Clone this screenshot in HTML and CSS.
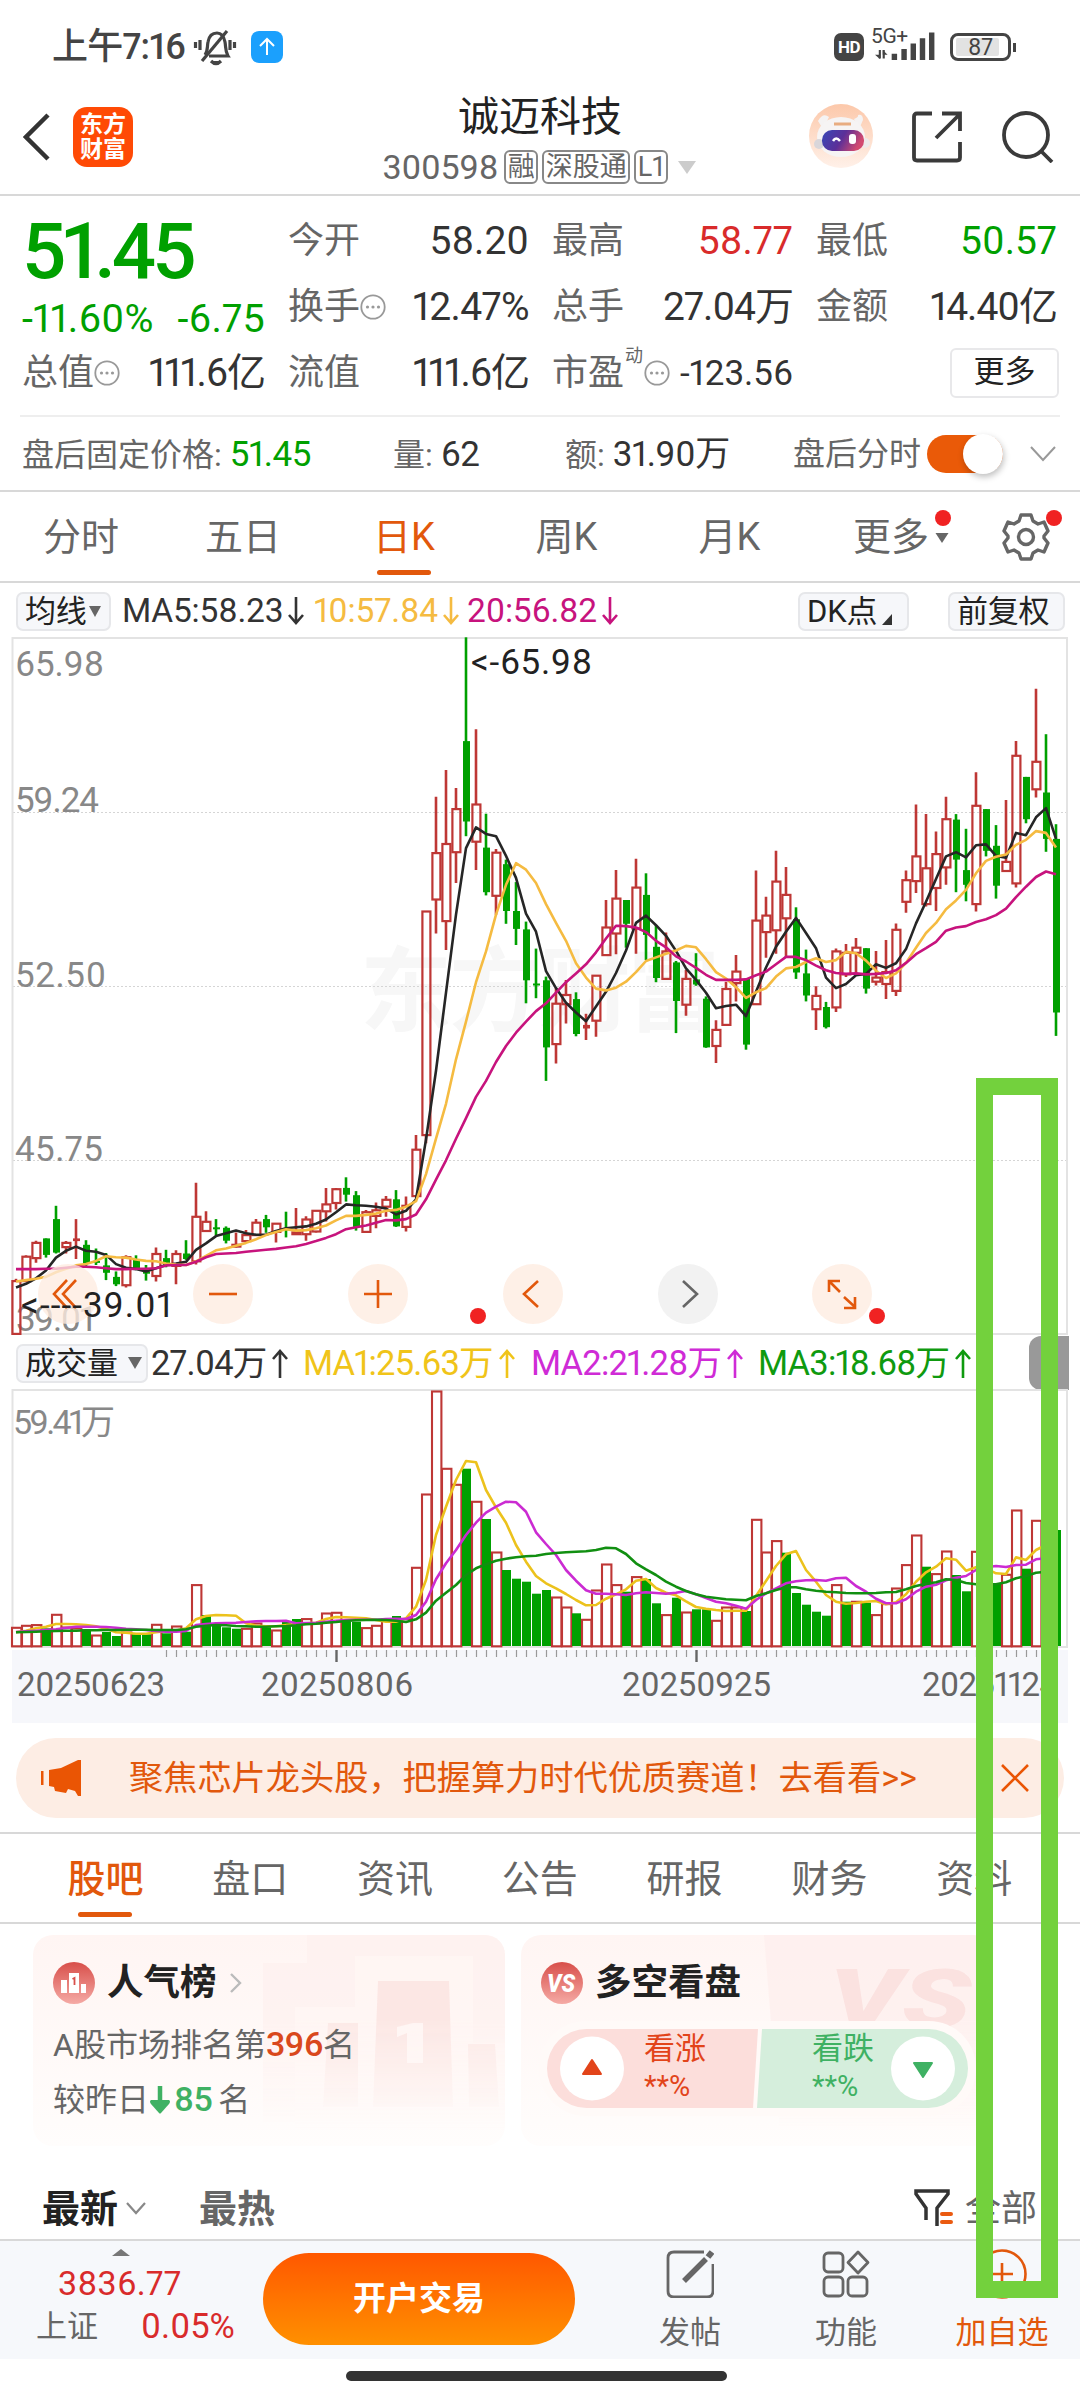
FILE: index.html
```html
<!DOCTYPE html>
<html lang="zh-CN">
<head>
<meta charset="utf-8">
<title>诚迈科技 300598</title>
<link rel="stylesheet" href="styles.css">
</head>
<body>
<div class="phone">
  <div class="status">
    <span class="clock">上午7:16</span>
    <svg class="bell" width="44" height="38" viewBox="0 0 44 38" fill="none" stroke="#444" stroke-width="3.2"><path d="M12 27C15 23 14 19 15 14C16 8 19 5 24 5C29 5 31 9 32 14C33 19 32 23 35 28H16"/><path d="M34 3L9 33"/><path d="M18 33Q23 38 28 33" fill="#444"/><path d="M7 12V22M2.5 14V20M37 12V22M41.500 14V20"/></svg>
    <svg class="up-app" width="32" height="32" viewBox="0 0 32 32"><rect width="32" height="32" rx="8" fill="#1ba0fd"/><path d="M16 24V9M9 15L16 8L23 15" fill="none" stroke="#fff" stroke-width="2"/></svg>
    <span class="grow"></span>
    <span class="hd">HD</span>
    <span class="signal"><span class="net">5G+</span>
      <svg width="65" height="29" viewBox="0 0 65 29"><path d="M5 18V27M9 18V27" stroke="#444" stroke-width="2.200"/><path d="M0 23L5 27.500V23ZM8 18L13 23H8Z" fill="#444"/><path d="M20 28.500V22M30 28.500V17M39.500 28.500V11.500M49 28.500V6M58.500 28.500V0" stroke="#444" stroke-width="5.600"/></svg>
    </span>
    <span class="battery"><b>87</b></span>
  </div>

  <header class="header">
    <svg class="back" width="28" height="48" viewBox="0 0 28 48"><path d="M25 2L3 24L25 46" fill="none" stroke="#333" stroke-width="4.500"/></svg>
    <span class="logo">东方<br>财富</span>
    <div class="title">
      <h1>诚迈科技</h1>
      <div class="code"><span class="num">300598</span><i>融</i><i>深股通</i><i>L1</i><svg width="18" height="13" viewBox="0 0 18 13"><path d="M0 0H18L9 13Z" fill="#ccc"/></svg></div>
    </div>
    <svg class="avatar" width="64" height="66" viewBox="0 0 64 66">
      <defs><linearGradient id="peach" x2="0" y2="1"><stop stop-color="#fcc8aa"/><stop offset="1" stop-color="#fff1e9"/></linearGradient><linearGradient id="visor" x2="1" y2=".3"><stop stop-color="#3748b8"/><stop offset=".55" stop-color="#5c2f98"/><stop offset="1" stop-color="#d24a70"/></linearGradient></defs>
      <circle cx="32" cy="33" r="32" fill="url(#peach)"/>
      <path d="M9 18Q14 9 20 14L14 26ZM54 17Q54 11 49 12Q50 14 45 16L50 26Z" fill="#f5f3f3"/>
      <ellipse cx="32" cy="34" rx="24" ry="20" fill="#f6f4f4"/><circle cx="10" cy="41" r="5" fill="#d9d6da"/><circle cx="56" cy="40" r="5" fill="#eeeaea"/>
      <path d="M25 21H42" stroke="#e8ac80" stroke-width="3"/>
      <rect x="13" y="27" width="42" height="21" rx="10" fill="url(#visor)"/>
      <path d="M24 38Q27 33 31 38" fill="none" stroke="#fff" stroke-width="2.500"/><rect x="40" y="31" width="7" height="10" rx="3" fill="#fff"/>
    </svg>
    <svg class="share" width="50" height="52" viewBox="0 0 50 52" fill="none" stroke="#3a3a3a" stroke-width="3.800"><path d="M20 2.500H5Q2 2.500 2 5.500V46.500Q2 49.500 5 49.500H45Q48 49.500 48 46.500V31"/><path d="M30 2.500H48V20M47 4L24 27"/></svg>
    <svg class="search" width="52" height="52" viewBox="0 0 52 52" fill="none" stroke="#3a3a3a" stroke-width="3.800"><circle cx="24" cy="24" r="22"/><path d="M39 40L50 51"/></svg>
  </header>

  <section class="quote">
    <div class="col first">
      <div class="price">51.45</div>
      <div class="row change"><span>-11.60%</span><span>-6.75</span></div>
      <div class="row"><label>总值<svg class="dots"><use href="#dots"/></svg></label><span class="k">111.6亿</span></div>
    </div>
    <div class="col">
      <div class="row"><label>今开</label><span>58.20</span></div>
      <div class="row"><label>换手<svg class="dots"><use href="#dots"/></svg></label><span class="k2">12.47%</span></div>
      <div class="row"><label>流值</label><span class="k">111.6亿</span></div>
    </div>
    <div class="col">
      <div class="row"><label>最高</label><span class="red">58.77</span></div>
      <div class="row"><label>总手</label><span class="k">27.04万</span></div>
      <div class="row"><label>市盈<sup>动</sup><svg class="dots"><use href="#dots"/></svg></label><span class="pe">-123.56</span></div>
    </div>
    <div class="col">
      <div class="row"><label>最低</label><span class="green">50.57</span></div>
      <div class="row"><label>金额</label><span class="k">14.40亿</span></div>
      <div class="row"><b class="more-btn">更多</b></div>
    </div>
  </section>
  <svg width="0" height="0" class="defs"><defs><g id="dots"><circle cx="13" cy="13" r="11.700" fill="none" stroke="#999" stroke-width="1.800"/><circle cx="7.500" cy="13" r="1.600" fill="#999"/><circle cx="13" cy="13" r="1.600" fill="#999"/><circle cx="18.500" cy="13" r="1.600" fill="#999"/></g></defs></svg>

  <section class="after">
    <span class="a1">盘后固定价格: <b class="green">51.45</b></span>
    <span class="a2">量: <b>62</b></span>
    <span class="a3">额: <b>31.90万</b></span>
    <span class="a4">盘后分时</span><span class="toggle"><i></i></span>
    <svg class="chev" width="26" height="16" viewBox="0 0 26 16"><path d="M1 1L13 14L25 1" fill="none" stroke="#999" stroke-width="2"/></svg>
  </section>

  <nav class="periods">
    <span>分时</span><span>五日</span><span class="on">日K</span><span>周K</span><span>月K</span>
    <span class="more">更多<svg width="14" height="34" viewBox="0 0 14 34"><path d="M.5 13H13.500L7 23Z" fill="#666"/></svg><i class="dot"></i></span>
    <span class="gear"><svg width="48" height="50" viewBox="0 0 48 50" fill="none" stroke="#666" stroke-width="3.400" stroke-linejoin="round"><path d="M19 3H29L31 9L36 12L42 10L46 19L42 24V26L46 31L42 40L36 38L31 41L29 47H19L17 41L12 38L6 40L2 31L6 26V24L2 19L6 10L12 12L17 9Z"/><circle cx="24" cy="25" r="7.500"/></svg><i class="dot"></i></span>
  </nav>

  <div class="indicators">
    <b class="chip c1">均线<svg width="12" height="11" viewBox="0 0 12 11"><path d="M0 0H12L6 11Z" fill="#666"/></svg></b>
    <span class="m1">MA5:58.23<svg class="arr"><use href="#down"/></svg></span>
    <span class="m2">10:57.84<svg class="arr"><use href="#down"/></svg></span>
    <span class="m3">20:56.82<svg class="arr"><use href="#down"/></svg></span>
    <span class="grow"></span>
    <b class="chip c2">DK点<svg width="10" height="11" viewBox="0 0 10 11"><path d="M10 0V11H0Z" fill="#333"/></svg></b>
    <b class="chip c3">前复权</b>
  </div>
  <svg width="0" height="0" class="defs"><defs>
    <path id="down" d="M8 2V28M1 20L8 28L15 20" fill="none" stroke="currentColor" stroke-width="2.600"/>
    <path id="up" d="M8 30V3M1 11L8 3L15 11" fill="none" stroke="currentColor" stroke-width="2.600"/>
  </defs></svg>

  <div class="kline">
    <svg id="kline" width="1080" height="698" viewBox="0 637 1080 698"></svg>
    <div class="tools">
      <span><svg viewBox="0 0 60 60"><path d="M29 16L16 30L29 44M38 16L25 30L38 44"/></svg></span>
      <span><svg viewBox="0 0 60 60"><path d="M16 30H44"/></svg></span>
      <span><svg viewBox="0 0 60 60"><path d="M16 30H44M30 16V44"/></svg></span>
      <span><svg viewBox="0 0 60 60"><path d="M35 17L21 30L35 43"/></svg><i class="dot"></i></span>
      <span class="off"><svg viewBox="0 0 60 60"><path d="M25 17L39 30L25 43"/></svg></span>
      <span><svg viewBox="0 0 60 60"><path d="M28 17H17V28M17 17L28 28M32 33L43 43M32 44H43V33"/></svg><i class="dot"></i></span>
    </div>
    <span class="low">&lt;----39.01</span>
  </div>

  <div class="volhead">
    <b class="chip">成交量<svg width="14" height="12" viewBox="0 0 14 12"><path d="M0 0H14L7 12Z" fill="#666"/></svg></b>
    <span class="v0">27.04万<svg class="arr"><use href="#up"/></svg></span>
    <span class="v1">MA1:25.63万<svg class="arr"><use href="#up"/></svg></span>
    <span class="v2">MA2:21.28万<svg class="arr"><use href="#up"/></svg></span>
    <span class="v3">MA3:18.68万<svg class="arr"><use href="#up"/></svg></span>
    <span class="grow"></span><i class="handle"></i>
  </div>
  <svg id="volume" class="block" width="1080" height="334" viewBox="0 1389 1080 334"></svg>

  <div class="banner">
    <svg width="42" height="36" viewBox="0 0 42 36"><path d="M1 11V25" stroke="#ea5504" stroke-width="3"/><path d="M8 10L20 8L37 0H40V36H37L34 31L27 29L25 33L14 31L13 27L8 26Z" fill="#ea5504"/></svg>
    <span>聚焦芯片龙头股，把握算力时代优质赛道！去看看&gt;&gt;</span>
    <svg class="x" width="30" height="30" viewBox="0 0 30 30"><path d="M2 2L28 28M28 2L2 28" stroke="#ea5504" stroke-width="2.600"/></svg>
  </div>

  <nav class="sections"><span class="on">股吧</span><span>盘口</span><span>资讯</span><span>公告</span><span>研报</span><span>财务</span><span>资料</span></nav>

  <div class="cards">
    <div class="card">
      <svg class="art" viewBox="0 0 472 211"><path d="M230 28H274V0H472V211H230Z" fill="#fdeeec" opacity=".55"/><path d="M262 72H322V21H440V108H472V211H262Z" fill="#fff6f4" opacity=".8"/><path d="M345 46H416L420 172H340Z" fill="#fbe4e1" opacity=".8"/><path d="M295 88H325V172H290ZM435 109H462L466 172H436Z" fill="#fbe6e3" opacity=".8"/><path d="M390 88V128H374V98L364 102V92L380 88Z" fill="#fff5f3"/></svg>
      <div class="ct"><svg width="42" height="42" viewBox="0 0 42 42"><circle cx="21" cy="21" r="21" fill="url(#badge)"/><path d="M8 18H14V31H8ZM28 22H33V31H28ZM16 11H26V31H16Z" fill="#fff"/><path d="M19.500 17L21.500 16V23" fill="none" stroke="#d84f4a" stroke-width="1.800"/></svg><h2>人气榜</h2><svg width="13" height="20" viewBox="0 0 13 20"><path d="M2 1L11 10L2 19" fill="none" stroke="#bbb" stroke-width="2.400"/></svg></div>
      <p>A股市场排名第<b class="orange">396</b>名</p>
      <p>较昨日<svg width="22" height="28" viewBox="0 0 22 28"><path d="M11 0V16" stroke="#3fb163" stroke-width="4.500"/><path d="M2 14H20Q22 15 20 18L12 27Q11 28 10 27L2 18Q0 15 2 14Z" fill="#3fb163"/></svg><b class="grn">85</b><span class="ming">名</span></p>
    </div>
    <div class="card">
      <svg class="art" viewBox="0 0 472 211"><path d="M243 0H472V211H260Z" fill="#fdeeec" opacity=".7"/><text x="308" y="92" font-size="82" textLength="142" lengthAdjust="spacingAndGlyphs" fill="#fbe2e0" class="vs">VS</text></svg>
      <div class="ct"><svg width="42" height="42" viewBox="0 0 42 42"><defs><linearGradient id="badge" x2="0" y2="1"><stop stop-color="#d84f4a"/><stop offset="1" stop-color="#f5aaa5"/></linearGradient></defs><circle cx="21" cy="21" r="21" fill="url(#badge)"/><text x="6" y="30" font-size="25" textLength="28" lengthAdjust="spacingAndGlyphs" class="vs" fill="#fff">VS</text></svg><h2>多空看盘</h2></div>
      <div class="poll">
        <svg class="pollbg" width="437" height="95" viewBox="0 0 437 95"><rect width="437" height="95" rx="47" fill="#fffaf8"/><path d="M47.500 8H219L214 87H47.500A39.500 39.500 0 0 1 47.500 8Z" fill="#fcdedb"/><path d="M223 8H389.500A39.500 39.500 0 0 1 389.500 87H218Z" fill="#d5eedc"/><circle cx="53" cy="47.500" r="32" fill="#fff"/><circle cx="384" cy="47.500" r="32" fill="#fff"/><path d="M53 39L62 53H44Z" fill="#e2441a" stroke="#e2441a" stroke-width="2" stroke-linejoin="round"/><path d="M384 56L393 42H375Z" fill="#3fb163" stroke="#3fb163" stroke-width="2" stroke-linejoin="round"/></svg>
        <span class="bull">看涨<br><small>**%</small></span><span class="bear">看跌<br><small>**%</small></span>
      </div>
    </div>
  </div>

  <div class="filters"><b>最新</b><svg width="20" height="14" viewBox="0 0 20 14"><path d="M1 1L10 11L19 1" fill="none" stroke="#888" stroke-width="2.200"/></svg><b class="hot">最热</b><span class="grow"></span>
    <svg width="40" height="42" viewBox="0 0 40 42"><path d="M12 32V20L2 6V3H34V6L23 20V38" fill="none" stroke="#333" stroke-width="3.500"/><path d="M28 26H37M28 34H37" stroke="#ea5a10" stroke-width="4" stroke-linecap="round"/></svg><span class="all">全部</span></div>

  <footer class="bar">
    <div class="index"><svg width="18" height="7" viewBox="0 0 18 7"><path d="M0 7L9 0L18 7Z" fill="#777"/></svg><div class="pt">3836.77</div><div class="sub"><span>上证</span><em>0.05%</em></div></div>
    <b class="open">开户交易</b>
    <div class="act"><svg width="48" height="48" viewBox="0 0 48 48" fill="none" stroke="#666" stroke-width="2.800"><path d="M38 2H8Q2 2 2 8V41Q2 47 8 47H41Q47 47 47 41V14"/><path d="M18 31L40 9" stroke-width="5.500"/><path d="M42 7L46 2" stroke-width="6"/></svg>发帖</div>
    <div class="act"><svg width="48" height="48" viewBox="0 0 48 48" fill="none" stroke="#666" stroke-width="2.800"><rect x="2" y="3" width="19" height="19" rx="4"/><rect x="2" y="27" width="19" height="19" rx="4"/><rect x="26" y="27" width="19" height="19" rx="4"/><path d="M36 2L46 12.500L36 23L26 12.500Z" stroke-linejoin="round"/></svg>功能</div>
    <div class="act add"><svg width="50" height="50" viewBox="0 0 50 50" fill="none" stroke="#e2580c" stroke-width="2.600"><circle cx="25" cy="25" r="23.500"/><path d="M14 25H36M25 14V36"/></svg>加自选</div>
  </footer>
  <div class="home"><i></i></div>
  <div class="mark"></div>
</div>
<script src="chart.js"></script>
</body>
</html>
```
FILE: styles.css
```css
*{box-sizing:border-box}
body{margin:0;background:#fff}
.phone{position:relative;width:1080px;height:2400px;overflow:hidden;background:#fff;color:#333;font-family:Roboto,"Noto Sans CJK SC",sans-serif;font-size:36px;line-height:1;font-variant-numeric:proportional-nums}
b,i,em,h1,h2{font-weight:400;font-style:normal;margin:0}
.grow{flex:1}
.block{display:block}
.defs{position:absolute}
.red{color:#d92b2b}.green{color:#00a000}.orange{color:#d9481c}.grn{color:#3fb163}
.dot{position:absolute;width:16px;height:16px;border-radius:50%;background:#f02222}

.status{display:flex;align-items:center;height:92px;padding:1px 69px 0 52px;color:#444}
.clock{font-size:36px;font-weight:500;width:141px;letter-spacing:-.8px;white-space:nowrap}
.up-app{margin-left:14px}
.hd{width:30px;height:28px;border-radius:7px;background:#444;color:#fff;font-size:17px;font-weight:700;line-height:28px;text-align:center;letter-spacing:-.5px}
.signal{display:flex;position:relative;width:63px;margin-left:11px;align-items:flex-end;height:29px}
.net{position:absolute;left:-4px;top:-6px;font-size:21px;letter-spacing:-.4px}
.battery{position:relative;width:61px;height:28px;border:3px solid #444;border-radius:8px;margin-left:12px;padding:2px 3px}
.battery b{display:block;width:43px;height:18px;background:#e2e2e2;border-radius:2px;text-align:center;font-size:23px;line-height:19px;padding-left:6px}
.battery:after{content:"";position:absolute;right:-8px;top:7px;width:3px;height:9px;background:#444}

.header{display:flex;align-items:flex-start;height:104px;border-bottom:2px solid #d8d8d8;padding-left:23px}
.back{margin-top:21px}
.logo{width:60px;height:60px;margin:15px 0 0 22px;border-radius:14px;background:#ff4a05;color:#fff;font-weight:700;font-size:23px;line-height:25px;padding-top:5px;text-align:center}
.title{width:400px;margin-left:207px;text-align:center;flex:none}
h1{font-size:41px;line-height:50px;color:#222}
.code{display:flex;align-items:center;justify-content:center;gap:4px;height:34px;margin-top:8px;color:#666;width:320px;margin-left:39px}
.code .num{font-size:34px;margin-right:2px;letter-spacing:-.2px}
.code i{border:2px solid #888;border-radius:6px;font-size:27px;height:34px;line-height:30px;padding:0 1.500px}
.code svg{margin-left:6px}
.avatar{margin:11px 0 0 69px}
.share{margin:19px 0 0 39px}
.search{margin:19px 0 0 40px}

.quote{display:grid;grid-template-columns:244px 240px 240px 240px;gap:0 24px;height:221px;margin:0 20px;padding:12px 0 0 2px;border-bottom:2px solid #eee}
.col{margin:0 1px 0 -2px}
.col.first{margin-left:0}
.row{display:flex;justify-content:space-between;align-items:center;height:66px;font-size:39px;letter-spacing:0;white-space:nowrap}
.row .k{letter-spacing:-1px}
.row .k2{letter-spacing:-.6px}
.row label{display:flex;align-items:center;font-size:36px;color:#666;letter-spacing:0}
.dots{width:26px;height:26px}
.first .price{height:88px;line-height:88px;font-size:78px;font-weight:500;color:#00a000;letter-spacing:-4px}
.first .change{height:46px;color:#00a000;font-size:39.500px;letter-spacing:.2px}
.first .row:last-child{height:62px}
.row sup{font-size:18px;align-self:flex-start;margin:-8px 1px 0}
.row .pe{letter-spacing:0;font-size:35px}
.more-btn{margin-left:auto;width:109px;height:50px;border:2px solid #e8e8ea;border-radius:6px;line-height:44px;text-align:center;font-size:31px;letter-spacing:0;color:#222;margin-right:-2px}

.after{display:flex;align-items:center;height:75px;border-bottom:2px solid #d8d8d8;padding:1px 24px 0 22px;font-size:32px;color:#666;white-space:nowrap}
.after b{font-size:35px;color:#333;letter-spacing:-.4px}
.after b.green{color:#00a000}
.a1{width:371px}.a2{width:172px}.a3{width:228px}.a4{width:134px}
.toggle{width:76px;height:38px;border-radius:19px;background:#ea5a08;padding-left:36px}
.toggle i{display:block;width:40px;height:40px;margin-top:-1px;border-radius:50%;background:#fff;box-shadow:1px 3px 6px rgba(0,0,0,.25)}
.chev{margin-left:27px}

.periods{display:grid;grid-template-columns:162px 162px 160px 165px 161px 142px 128px;height:91px;border-bottom:2px solid #d8d8d8;font-size:38px;color:#666}
.periods>span{position:relative;display:flex;align-items:center;justify-content:center;height:90px}
.periods .on{color:#e2580c}
.periods .on:after,.sections .on:after{content:"";position:absolute;left:50%;bottom:7px;width:54px;height:5px;margin-left:-27px;border-radius:3px;background:#e2580c}
.more svg{margin:0 0 0 6px}
.more .dot{left:125px;top:18px}
.periods .gear{padding-left:20px}
.gear .dot{right:18px;top:18px}
.periods .more{justify-content:flex-start;padding-left:43px}

.chip{display:flex;align-items:center;border:2px solid #e6e7ea;border-radius:7px;background:#f6f7fa;height:39px;color:#222;font-size:31px;padding-left:7px;white-space:nowrap;flex:none}
.indicators{display:flex;align-items:center;height:54px;padding:2px 15px 0 16px;font-size:33.500px;letter-spacing:-.2px;white-space:nowrap}
.indicators .chip svg{margin-left:2px}
.c1{width:95px}.c2{width:111px;margin-right:39px}.c3{width:117px}
.indicators .c2 svg{margin:16px 0 0 5px}
.arr{width:16px;height:32px;margin-left:5px;vertical-align:-5px}
.m1{margin-left:11px;width:192px}
.m2{width:153px;color:#f5bb41}
.m3{color:#c7137d}

.kline{position:relative;height:698px}
.kline>svg{display:block;overflow:visible}
.tools{position:absolute;left:38px;top:627px;display:flex;gap:94.900px}
.tools span{position:relative;width:60px;height:60px;border-radius:50%;background:rgba(254,236,224,.78)}
.tools svg{display:block;fill:none;stroke:#e2580c;stroke-width:2.600}
.tools .off{background:#f2f2f2}
.tools .off svg{stroke:#666}
.tools .dot{left:-33px;top:44px}
.tools span:last-child .dot{left:57px}
.low{position:absolute;left:21px;top:651px;font-size:35px;color:#222;letter-spacing:1.100px}

.volhead{display:flex;align-items:center;height:54px;padding:2px 11px 0 16px;font-size:34.500px;white-space:nowrap;letter-spacing:-.8px}
.volhead .chip{width:132px;letter-spacing:0}
.volhead .chip svg{margin-left:10px}
.volhead .arr{margin-left:6px}
.v0{margin-left:3px;width:152px}
.v1{width:228px;color:#f0c419}
.v2{width:227px;color:#cf2bd6}
.v3{color:#0f9a0f}
.handle{width:40px;height:54px;border-radius:12px 0 0 12px;background:#999}

.banner{display:flex;align-items:center;width:1048px;height:80px;margin:15px 16px 0;border-radius:40px;background:#fdede4;padding:0 34px 0 25px;color:#e2580c;font-size:34.200px;white-space:nowrap}
.banner span{margin-left:46px;flex:1}

.sections{display:grid;grid-template-columns:repeat(7,144.800px);height:92px;margin-top:14px;padding-left:33px;border-top:2px solid #d8d8d8;border-bottom:2px solid #d8d8d8;font-size:38px;color:#666}
.sections span{position:relative;display:flex;align-items:center;justify-content:center;height:90px}
.sections .on{color:#e2580c;font-weight:500}

.cards{display:grid;grid-template-columns:472px 472px;gap:16px;padding:11px 0 0 33px}
.card{position:relative;height:211px;border-radius:20px;overflow:hidden;background:linear-gradient(#fff5f3,#fffdfc);padding:26px 0 0 20px;font-size:32px;color:#666}
.card>*{position:relative}
.card .art{position:absolute;left:0;top:0;width:472px;height:211px;-webkit-mask-image:linear-gradient(#000 40%,transparent 92%);mask-image:linear-gradient(#000 40%,transparent 92%)}
.vs{font-family:Roboto,sans-serif;font-weight:900;font-style:italic}
.ct{display:flex;align-items:center;height:44px}
h2{font-size:36.500px;font-weight:700;color:#222;margin:0 12px}
.card p{margin:0;height:55px;line-height:55px;white-space:nowrap}
.card .ct+p{margin-top:12px}
.card p b{font-size:34px;font-weight:500;letter-spacing:-.5px}
.card p svg{vertical-align:-3px;margin-right:3px}
.ming{margin-left:6px}
.poll{width:437px;height:95px;margin:16px 0 0 -2px}
.pollbg{position:absolute;left:0;top:0}
.poll span{position:absolute;left:105px;top:9px;font-size:31px;line-height:37px;color:#e2441a}
.poll small{font-size:29px}
.poll .bear{left:273px;color:#3fb163}

.filters{display:flex;align-items:center;height:93px;padding:32px 43px 0 42px;font-size:38px;color:#222}
.filters b{font-weight:700}
.filters b+svg{margin:0 53px 0 8px}
.filters .hot{color:#666}
.filters .all{font-size:36px;color:#666;margin-left:11px}

.bar{display:flex;height:120px;border-top:2px solid #d8d8d8;background:#f6f8fb}
.index{width:263px;color:#d92b2b}
.index svg{display:block;margin:8px 0 0 112px}
.pt{font-size:34px;margin:10px 0 0 58px;letter-spacing:.3px}
.sub{display:flex;font-size:34.500px;margin-top:9px;align-items:center}
.sub span{margin:0 43px 0 36px;font-size:31px;color:#666}
.open{width:312px;height:92px;margin-top:12px;border-radius:46px;background:linear-gradient(#ff5800,#ff9000);color:#fff;font-weight:700;font-size:33px;line-height:92px;text-align:center}
.act{display:flex;flex-direction:column;align-items:center;width:156px;padding-top:9px;font-size:31px;color:#666}
.act svg{margin-bottom:19px}
.open+.act{margin-left:37px}
.add{color:#e2580c;padding-top:8px}
.add svg{margin-bottom:18px}
.home{display:flex;justify-content:center;padding-top:12px}
.home i{width:381px;height:10px;border-radius:5px;background:#333;margin-left:-8px}
.mark{position:absolute;left:976px;top:1078px;width:82px;height:1220px;border:17px solid #73d13d}
```
FILE: chart.js
```js
// Candles: [colour, high, body top, body bottom, low], one per trading day, 10px apart.
const candles = `r1413,1418,1533,1533 r1362,1365,1418,1418 r1330,1335,1368,1378 g1325,1325,1361,1367 g1254,1283,1356,1358 r1331,1335,1344,1358 d1283,1325,1331,1370 g1329,1339,1380,1388 g1347,1374,1376,1383 g1357,1384,1400,1416
g1397,1409,1425,1429 r1362,1366,1427,1432 g1362,1371,1392,1392 g1383,1397,1402,1417 r1345,1359,1407,1419 g1350,1368,1383,1388 r1351,1359,1385,1425 g1329,1358,1370,1372 r1204,1278,1375,1382 r1266,1289,1309,1310
g1283,1301,1304,1319 g1299,1302,1330,1336 r1312,1339,1343,1345 r1307,1318,1331,1333 r1283,1291,1318,1320 g1274,1283,1301,1313 r1292,1293,1311,1334 g1267,1303,1305,1323 r1259,1312,1316,1318 r1277,1284,1316,1330
r1264,1265,1310,1312 r1215,1251,1266,1288 r1215,1218,1248,1262 g1192,1215,1230,1245 g1222,1231,1300,1308 r1263,1268,1311,1313 r1247,1264,1276,1303 r1233,1241,1256,1278 g1220,1240,1299,1300 r1234,1254,1300,1310
r1100,1132,1233,1235 r612,613,1100,1118 r363,486,587,661 r305,466,634,697 r344,390,484,551 g16,242,417,449 r216,380,461,523 g400,474,571,578 r477,485,579,620 g500,510,612,640
g549,612,651,686 g635,652,763,813 g694,770,774,802 g755,763,909,982 r780,814,902,944 r762,795,815,857 g789,804,880,885 d836,860,868,893 r752,753,851,886 r588,648,708,710
r523,585,661,706 g588,588,640,692 r498,561,650,705 g530,577,664,719 g643,690,758,767 r659,700,760,761 g721,724,808,878 r740,760,816,840 g704,761,772,775 g798,803,909,910
r850,871,906,943 r766,782,860,862 r708,744,769,809 g758,760,903,914 r524,633,815,817 r581,622,658,714 r481,548,654,705 r516,577,628,712 g604,630,746,760 g696,748,796,809
r776,797,826,871 g810,821,865,868 r694,700,822,832 r684,703,750,756 r671,692,703,748 g693,693,781,792 r699,757,766,774 r675,745,771,804 r639,653,786,797 r524,545,592,616
r380,493,547,573 r401,519,597,602 r439,488,562,612 r363,412,517,555 g401,413,500,571 g433,523,555,591 r310,383,597,613 g390,390,481,493 g425,470,557,585 r370,505,525,527
r242,274,552,561 g320,320,412,421 r128,287,347,365 g227,354,455,483 g423,455,833,884`.split(/\s+/);

const ma5 = "1432 1424 1412 1395 1367 1352 1343 1352 1354 1361 1381 1389 1392 1397 1390 1383 1380 1376 1350 1336 1320 1314 1308 1314 1317 1317 1309 1303 1301 1299 1293 1284 1268 1251 1253 1254 1256 1260 1273 1265 1240 1110 960 790 620 475 430 444 449 492 540 618 657 743 780 812 833 852 820 788 747 698 638 622 643 666 699 737 762 790 824 819 816 841 788 735 690 657 627 660 693 757 780 771 752 749 728 736 726 695 639 592 542 493 484 495 469 467 492 496 442 447 408 388 455";
const ma10 = "1419 1416 1413 1409 1399 1391 1384 1381 1374 1364 1366 1367 1371 1374 1375 1380 1382 1383 1375 1363 1351 1347 1341 1335 1327 1318 1311 1305 1308 1307 1303 1297 1286 1276 1276 1274 1271 1265 1263 1256 1244 1185 1108 1032 935 853 767 700 620 555 508 522 551 597 638 677 726 757 781 785 779 766 745 721 713 705 698 688 691 717 745 759 778 801 789 780 755 737 734 723 715 723 719 701 704 720 742 758 748 725 692 660 638 608 589 566 530 503 494 489 468 457 438 442 474";
const ma20 = "1392 1392 1392 1391 1391 1389 1387 1387 1388 1390 1392 1392 1391 1391 1390 1384 1383 1383 1376 1366 1359 1358 1357 1354 1352 1350 1348 1345 1342 1337 1331 1324 1316 1305 1301 1297 1291 1285 1286 1283 1273 1240 1197 1155 1108 1063 1017 982 941 906 877 853 830 813 790 767 748 728 702 672 644 645 648 658 677 691 711 722 736 751 762 762 762 761 752 744 728 712 712 719 731 741 747 749 748 750 749 747 741 725 706 693 679 655 648 645 636 630 621 607 582 559 538 526 532";

const vols = "r921 r915 r913 g925 r882 r920 r923 g928 r944 g936 g948 r935 g943 g943 r912 g940 r917 g935 r793 g885 g912 g922 g926 r924 r908 g922 r929 g903 g897 r895 r908 r878 r876 g905 g905 r922 r915 r896 g888 r895 r741 r521 r212 r444 r492 g446 r543 g597 r695 g750 g776 g785 g821 g810 r830 r860 g880 r897 r809 r731 r793 g815 r769 g777 g850 r883 g833 r875 g868 g868 r900 r860 r860 g873 r597 r695 r661 g698 g819 g854 g875 g887 r793 g845 r843 g848 r883 r850 r803 r733 r644 g740 r760 r692 g765 g814 r693 g750 g790 r762 r569 g746 r600 g640 g630".split(" ");
const v1 = "937 932 925 920 912 912 913 915 919 926 937 938 941 941 937 933 932 925 898 888 885 886 887 910 917 919 919 915 912 910 908 897 891 892 893 895 900 905 905 895 860 780 645 560 480 423 427 510 562 608 675 725 768 790 805 822 840 856 855 836 823 808 782 777 804 818 826 844 861 866 870 873 872 872 828 783 738 703 693 750 785 825 845 851 849 845 843 853 847 823 785 757 740 715 719 752 742 745 760 762 712 720 690 675 660";
const v2 = "936 934 932 930 928 924 920 920 920 921 923 926 928 930 933 935 935 933 915 912 910 909 908 906 904 903 903 902 910 909 908 905 902 900 899 899 899 897 896 897 885 845 778 730 690 645 608 578 560 545 547 575 637 672 705 750 782 811 821 821 823 825 820 817 819 821 818 813 823 834 845 850 857 866 840 820 805 790 784 781 780 782 775 773 798 815 836 850 850 838 815 800 794 781 773 768 750 742 738 741 735 734 718 715 710";
const v3 = "937 936 935 934 933 932 932 931 931 930 930 929 929 929 930 930 930 928 920 917 915 916 918 919 920 920 919 918 916 913 911 908 906 903 901 900 899 900 902 906 898 878 842 818 795 765 745 733 722 716 712 709 707 702 699 697 695 694 690 683 685 702 730 748 765 785 800 813 823 830 834 838 839 841 828 820 810 802 802 808 812 815 817 819 820 820 819 817 816 808 798 791 787 778 780 789 793 793 793 787 775 768 758 755 750";

const px = i => 16 + 10 * i;
const py = v => +(630 + v / 2.178).toFixed(1);
const vy = v => +(1320 + v / 3).toFixed(1);
const line = (s, f, c) => `<polyline fill="none" stroke="${c}" stroke-width="2.6" stroke-linejoin="round" points="${s.split(" ").map((v, i) => px(i) + "," + f(v)).join(" ")}"/>`;
const label = (x, y, w, t, c, size) => `<text x="${x}" y="${y}" textLength="${w}" font-size="${size}" fill="${c}">${t}</text>`;
const RED = "#be3735", GREEN = "#00a000";

let k = `<text x="360" y="1024" font-size="92" textLength="360" font-weight="700" fill="#f7f7f7">东方财富</text>`;
for (const y of [812.5, 986.5, 1160.5]) k += `<path d="M13 ${y}H1067" stroke="#d5d5d5" stroke-dasharray="2 2"/>`;
k += `<path d="M12.500 1334V638H1067V1334Z" fill="none" stroke="#e3e3e3" stroke-width="2"/>`;
k += label(15, 676, 89, "65.98", "#888", 35) + label(15, 812, 84, "59.24", "#888", 35) + label(15, 987, 91, "52.50", "#888", 35) + label(15, 1161, 88, "45.75", "#888", 35) + label(16, 1331, 79, "39.01", "#888", 35);
candles.forEach((s, i) => {
  const x = px(i), [h, t, b, l] = s.slice(1).split(",").map(v => py(+v)), kind = s[0];
  const c = kind === "g" ? GREEN : RED;
  if (kind === "r") k += `<path d="M${x} ${h}V${t}M${x} ${b}V${l}" stroke="${c}" stroke-width="2.6"/><rect x="${x - 3.6}" y="${t}" width="8" height="${Math.max(1.5, b - t).toFixed(1)}" fill="none" stroke="${c}" stroke-width="2.2"/>`;
  else k += `<path d="M${x} ${h}V${l}" stroke="${c}" stroke-width="2.6"/><rect x="${x - 3}" y="${t}" width="7" height="${Math.max(2, b - t).toFixed(1)}" fill="${c}"/>`;
});
k += line(ma5, py, "#262626") + line(ma10, py, "#f5bb41") + line(ma20, py, "#c7137d");
k += label(471, 674, 121, "&lt;-65.98", "#222", 35);
document.getElementById("kline").innerHTML = k;

let v = `<rect x="12" y="1650" width="1056" height="73" fill="#f6f7fb"/><path d="M12.500 1647V1390H1067V1647Z" fill="none" stroke="#e3e3e3" stroke-width="2"/>`;
v += label(13, 1434, 102, "59.41万", "#888", 34);
vols.forEach((s, i) => {
  const x = px(i) + .5, t = vy(+s.slice(1));
  v += s[0] === "r" ? `<rect x="${x - 4.5}" y="${t + .8}" width="9.4" height="${(1645.5 - t).toFixed(1)}" fill="#fff" stroke="${RED}" stroke-width="2.1"/>`
    : `<rect x="${x - 4.500}" y="${t}" width="9" height="${(1646 - t).toFixed(1)}" fill="${GREEN}"/>`;
  if (i > 14) v += `<path d="M${x} 1650V${[32, 68, 104].includes(i) ? 1662 : 1657}" stroke="${[32, 68, 104].includes(i) ? "#666" : "#999"}" stroke-width="${[32, 68, 104].includes(i) ? 2.4 : 1.2}"/>`;
});
v += line(v1, vy, "#ecc21c") + line(v2, vy, "#cb2bd2") + line(v3, vy, "#118f11");
v += label(17, 1696, 148, "20250623", "#666", 33) + label(261, 1696, 152, "20250806", "#666", 33) + label(622, 1696, 149, "20250925", "#666", 33) + label(922, 1696, 136, "20251124", "#666", 33);
document.getElementById("volume").innerHTML = v;
```
